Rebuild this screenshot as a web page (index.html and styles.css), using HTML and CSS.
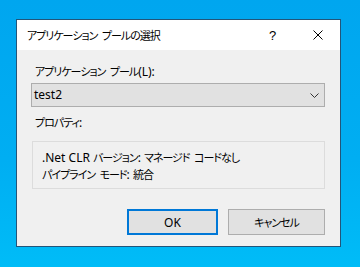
FILE: index.html
```html
<!DOCTYPE html>
<html>
<head>
  <meta charset="UTF-8">
  <title>アプリケーション プールの選択</title>
  <link rel="stylesheet" href="styles.css">
</head>
<body>
<div class="dialog">
    <div class="titlebar">
        <span class="caption"><span class="ja">アプリケーション プールの選択</span></span>
        <span class="tbtn help">?</span>
        <span class="tbtn close">
            <svg width="10" height="10" viewBox="0 0 10 10">
                <path d="M0.5 0.5 L9.5 9.5 M9.5 0.5 L0.5 9.5" stroke="#000" stroke-width="1" fill="none"/>
            </svg>
        </span>
    </div>
    <div class="content">
        <p class="label"><span class="ja">アプリケーション プール</span>(L):</p>
        <div class="combo">
            <span>test2</span>
            <svg width="9" height="5" viewBox="0 0 9 5">
                <path d="M0.5 0.5 L4.5 4.5 L8.5 0.5" stroke="#333" stroke-width="1" fill="none"/>
            </svg>
        </div>
        <p class="label props-label"><span class="ja">プロパティ</span>:</p>
        <div class="props">
            <p>.Net CLR <span class="ja">バージョン</span>: <span class="ja">マネージド コードなし</span></p>
            <p><span class="ja">パイプライン モード</span>: <span class="ja">統合</span></p>
        </div>
        <div class="buttons">
            <button class="btn ok">OK</button>
            <button class="btn cancel"><span class="ja">キャンセル</span></button>
        </div>
    </div>
</div>
</body>
</html>
```

FILE: styles.css
```css
* {
    margin: 0;
    padding: 0;
    box-sizing: border-box;
}
body {
    width: 360px;
    height: 267px;
    overflow: hidden;
    background: linear-gradient(180deg, #00a6ef 0%, #00aef2 60%, #00bcf7 100%);
    font-family: "Noto Sans", "Noto Sans CJK JP", sans-serif;
    font-size: 12px;
    color: #000;
    padding: 19px 0 0 16px;
}
.ja {
    font-family: "Noto Sans CJK JP", sans-serif;
    font-size: 11px;
    font-feature-settings: "palt";
    letter-spacing: -1px;
    word-spacing: 3px;
}
.dialog {
    width: 325px;
    height: 228px;
    border: 1px solid #22557a;
    background-color: #f0f0f0;
    display: flex;
    flex-direction: column;
}
.titlebar {
    height: 30px;
    background-color: #fff;
    display: flex;
    align-items: center;
    padding-left: 10px;
}
.caption {
    flex: 1;
    line-height: 16px;
}
.tbtn {
    width: 45px;
    height: 30px;
    display: flex;
    align-items: center;
    justify-content: center;
}
.help {
    font-family: "Liberation Sans", sans-serif;
    font-size: 13px;
}
.content {
    flex: 1;
    padding: 13px 15px 0 14px;
    display: flex;
    flex-direction: column;
}
.label {
    line-height: 16px;
    padding-left: 4px;
    margin-bottom: 3px;
}
.combo {
    height: 24px;
    border: 1px solid #adadad;
    background-color: #e1e1e1;
    display: flex;
    align-items: center;
    justify-content: space-between;
    padding: 0 5px 0 2px;
}
.combo span {
    line-height: 16px;
}
.props-label {
    margin-top: 7px;
    margin-bottom: 10px;
}
.props {
    height: 48px;
    margin-left: 1px;
    border: 1px solid #dcdcdc;
    padding: 7px 0 0 9px;
}
.props p {
    line-height: 16px;
}
.buttons {
    display: flex;
    justify-content: flex-end;
    gap: 10px;
    margin-top: 20px;
}
.btn {
    height: 26px;
    font: inherit;
    color: #000;
    background-color: #e1e1e1;
    border: 1px solid #adadad;
}
.ok {
    width: 91px;
    border: 2px solid #0078d7;
}
.cancel {
    width: 97px;
}
```
